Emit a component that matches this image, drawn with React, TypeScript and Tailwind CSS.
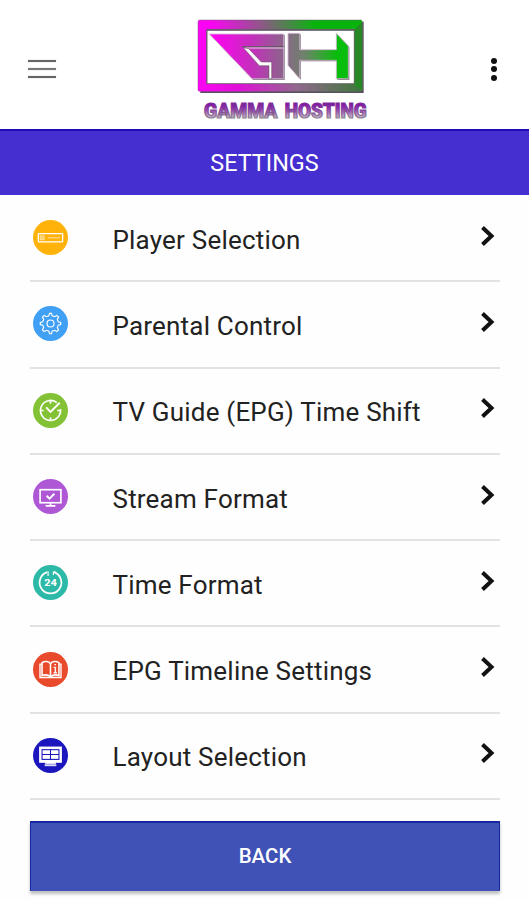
import type { ReactNode } from 'react'

interface SettingItem {
  label: string
  color: string
  icon: ReactNode
}

const SETTINGS: SettingItem[] = [
  {
    label: 'Player Selection',
    color: 'bg-[#ffb20a]',
    icon: (
      <>
        <rect x="5.5" y="14" width="25" height="8.5" rx="0.5" strokeWidth="1.3" />
        <path d="M7.5 16.3h4v4h-4zM8 16.8l3 3M11 16.8l-3 3" strokeWidth="0.8" opacity="0.8" />
        <path d="M15 18.3h13" strokeWidth="1.2" opacity="0.5" />
      </>
    ),
  },
  {
    label: 'Parental Control',
    color: 'bg-[#40a0f5]',
    icon: (
      <>
        <path
          d="M16.3 10l.7-2.5h2l.7 2.5 2.5 1 2.3-1.3 1.8 1.8-1.3 2.3 1 2.5 2.5.7v2l-2.5.7-1 2.5 1.3 2.3-1.8 1.8-2.3-1.3-2.5 1-.7 2.5h-2l-.7-2.5-2.5-1-2.3 1.3-1.8-1.8 1.3-2.3-1-2.5-2.5-.7v-2l2.5-.7 1-2.5-1.3-2.3 1.8-1.8 2.3 1.3z"
          strokeWidth="1.2"
        />
        <circle cx="18" cy="18" r="3.6" strokeWidth="1.2" />
      </>
    ),
  },
  {
    label: 'TV Guide (EPG) Time Shift',
    color: 'bg-[#83c234]',
    icon: (
      <>
        <path d="M24.5 10A10.3 10.3 0 1 0 28.2 16.5" strokeWidth="1.7" />
        <path d="M18 8v3M18 25v3M8 18h3M25 18h3" strokeWidth="1.7" />
        <path d="M13.5 14.8l4.5 4.7 9.5-9.5" strokeWidth="2" />
      </>
    ),
  },
  {
    label: 'Stream Format',
    color: 'bg-[#ae58d6]',
    icon: (
      <>
        <rect x="7.3" y="11" width="21.4" height="13.4" strokeWidth="1.7" />
        <path d="M18 25v2.5M13 27.6h10" strokeWidth="1.7" />
        <path d="M14 17.2l3 3 5-5" strokeWidth="2" />
      </>
    ),
  },
  {
    label: 'Time Format',
    color: 'bg-[#2cb9a8]',
    icon: (
      <>
        <path d="M14.5 7.4A11.2 11.2 0 1 0 21.5 7.4" strokeWidth="1.8" />
        <path d="M15.5 6.5v4.7M21 10.2V7.2h2.8" strokeWidth="1.2" />
        <text
          x="18"
          y="21.7"
          textAnchor="middle"
          textLength="13"
          lengthAdjust="spacingAndGlyphs"
          className="fill-white stroke-none text-[9.5px] font-extrabold"
        >
          24
        </text>
      </>
    ),
  },
  {
    label: 'EPG Timeline Settings',
    color: 'bg-[#e84a2b]',
    icon: (
      <>
        <path d="M18 25.5V12.2c-1.6-3-6-3-8.7-1.3v13.2c3.4-1 6.5-.6 8.7 1.4 2.2-2 5.3-2.4 8.7-1.4V10.9c-2.7-1.7-7.1-1.7-8.7 1.3" strokeWidth="1.6" />
        <path d="M9.3 12.5H7.2v13.7h21.6V12.5h-2.1" strokeWidth="1.4" />
        <path d="M21.2 15.8h1.8v5.4M21.2 21.4h3.4M22 13h1.7" strokeWidth="1.5" />
      </>
    ),
  },
  {
    label: 'Layout Selection',
    color: 'bg-[#1b16bd]',
    icon: (
      <>
        <rect x="7" y="9.5" width="22" height="15.3" className="fill-white" strokeWidth="1.4" />
        <rect x="9.3" y="12" width="17.4" height="10" className="fill-white stroke-[#1b16bd]" strokeWidth="1.1" />
        <path d="M18 12V22M9.3 17h17.4" className="stroke-[#1b16bd]" strokeWidth="1.1" />
        <path d="M12.5 25.5h11" strokeWidth="2.2" />
        <path d="M12 28h12" strokeWidth="2" opacity="0.85" />
      </>
    ),
  },
]

function Logo() {
  return (
    <svg viewBox="0 0 570 345" className="block h-[115px] w-[190px]">
      <defs>
        <linearGradient id="frame" gradientUnits="userSpaceOnUse" x1="90" y1="140" x2="380" y2="65">
          <stop offset="0" stopColor="#fb04f4" />
          <stop offset="0.45" stopColor="#96528f" />
          <stop offset="1" stopColor="#08b40c" />
        </linearGradient>
        <linearGradient id="mark" gradientUnits="userSpaceOnUse" x1="75" y1="130" x2="440" y2="130">
          <stop offset="0" stopColor="#fb04ee" />
          <stop offset="0.3" stopColor="#c52fbd" />
          <stop offset="0.57" stopColor="#8a6689" />
          <stop offset="0.74" stopColor="#6d8469" />
          <stop offset="1" stopColor="#09bd0c" />
        </linearGradient>
        <linearGradient id="base" x1="0" y1="0" x2="1" y2="0">
          <stop offset="0" stopColor="#fb04f4" />
          <stop offset="0.25" stopColor="#e010d8" />
          <stop offset="0.6" stopColor="#92688e" />
          <stop offset="1" stopColor="#3b7938" />
        </linearGradient>
        <linearGradient id="name" gradientUnits="userSpaceOnUse" x1="0" y1="275" x2="0" y2="325">
          <stop offset="0.1" stopColor="#7d10a5" />
          <stop offset="0.45" stopColor="#9440ae" />
          <stop offset="1" stopColor="#c5bcc6" />
        </linearGradient>
        <linearGradient id="nameEdge" gradientUnits="userSpaceOnUse" x1="0" y1="275" x2="0" y2="325">
          <stop offset="0.3" stopColor="#7d2c98" />
          <stop offset="1" stopColor="#8a818c" />
        </linearGradient>
      </defs>
      <path d="M31 35H521V249H31zM52 62V223H495V62z" fillRule="evenodd" fill="#5a4d60" />
      <path d="M29 30H512Q517 30 517 36V239Q517 244 511 244H29Q24 244 24 238V36Q24 30 29 30zM50 58V221H493V58z" fillRule="evenodd" fill="url(#frame)" stroke="#6e5f70" strokeWidth="1.5" />
      <path d="M25 222H492L517 239Q517 244 511 244H29Q24 244 24 238z" fill="url(#base)" />
      <path d="M493 60L516 36V239L493 221z" fill="#268825" />
      <path d="M50 59H493V221H50z" fill="none" stroke="#6a5f6d" strokeWidth="2" />
      <g strokeLinejoin="round">
        <g transform="translate(3 3)" fill="#6b5f6e">
          <path d="M58 72H281V206H186z" />
          <path d="M294 70H329V119H439V70L475 108V206H439V151H329V206L294 166z" />
        </g>
        <g fill="url(#mark)" stroke="#d6b6d5" strokeWidth="2.5">
          <path d="M58 72H281V206H186z" />
          <path d="M294 70H329V119H439V70L475 108V206H439V151H329V206L294 166z" />
        </g>
        <path d="M156 110H281" stroke="#6a566b" strokeWidth="4" />
        <path d="M166 114H281" stroke="#e3d2e2" strokeWidth="3" />
        <path d="M160 113L176 116L214 156H245V206H237V167H208z" fill="#fff" stroke="#5a4c5b" strokeWidth="1.5" />
      </g>
      <g
        fill="url(#name)"
        stroke="url(#nameEdge)"
        strokeWidth="3.5"
        className="font-['Roboto'] text-[60px] font-black"
      >
        <text x="42" y="323" textLength="220" lengthAdjust="spacingAndGlyphs">
          GAMMA
        </text>
        <text x="284" y="323" textLength="246" lengthAdjust="spacingAndGlyphs">
          HOSTING
        </text>
      </g>
    </svg>
  )
}

function Header() {
  return (
    <header className="flex h-[129px] items-start bg-white pt-[10px]">
      <button aria-label="Menu" className="mt-[50px] ml-7 flex w-[28px] flex-col gap-[6px]">
        <span className="h-[2px] w-full bg-[#666] shadow-[0_0_1px_#888]" />
        <span className="h-[2px] w-full bg-[#777] shadow-[0_0_1px_#888]" />
        <span className="h-[2px] w-full bg-[#666] shadow-[0_0_1px_#888]" />
      </button>
      <div className="ml-[134px]">
        <Logo />
      </div>
      <button aria-label="More options" className="mt-[47.5px] ml-[111px] flex flex-col gap-[2.6px]">
        <span className="size-[6.2px] rounded-full bg-[#111]" />
        <span className="size-[6.2px] rounded-full bg-[#111]" />
        <span className="size-[6.2px] rounded-full bg-[#111]" />
      </button>
    </header>
  )
}

function SettingRow({ label, color, icon }: SettingItem) {
  return (
    <li className="flex h-[86.3px] items-center border-b-2 border-[#e2e2e2] pl-[3px]">
      <span className={`mb-px flex size-[35px] shrink-0 items-center justify-center rounded-full ${color}`}>
        <svg viewBox="0 0 36 36" fill="none" stroke="#fff" className="size-[35px]">
          {icon}
        </svg>
      </span>
      <span className="mt-[4px] ml-[44.5px] flex-1 text-[26px] tracking-[0.2px] whitespace-nowrap text-[#222]">{label}</span>
      <svg viewBox="0 0 16 22" fill="none" className="mr-[4px] mb-[5px] h-[22px] w-4">
        <path d="M2.5 2.5L11.5 11L2.5 19.5" stroke="#111" strokeWidth="4" />
      </svg>
    </li>
  )
}

export default function App() {
  return (
    <div className="flex h-[900px] w-[529px] flex-col overflow-hidden bg-[#fefefe] font-['Roboto',sans-serif]">
      <Header />
      <h1 className="flex h-[66px] items-center justify-center border-t-2 border-[#1e0cb6] bg-[#452fd0] pt-px text-[23.4px] text-white">
        SETTINGS
      </h1>
      <ul className="mt-px mr-[29px] ml-[30px]">
        {SETTINGS.map((item) => (
          <SettingRow key={item.label} {...item} />
        ))}
      </ul>
      <button className="mt-[21px] mr-[29px] ml-[30px] h-[70px] shrink-0 border border-t-2 border-[#1526a0] border-b-[#4052b5] bg-[#4052b5] text-[20.5px] font-medium text-white shadow-[0_3px_3px_rgba(0,0,0,0.25)]">
        BACK
      </button>
    </div>
  )
}
